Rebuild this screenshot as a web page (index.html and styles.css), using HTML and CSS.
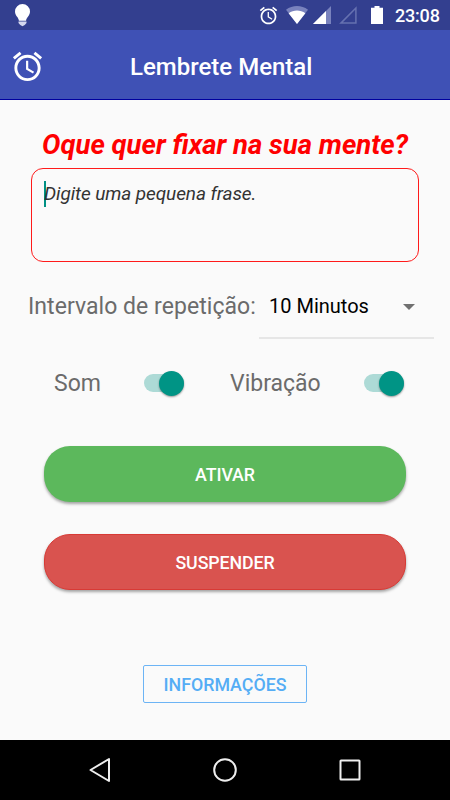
FILE: index.html
```html
<!DOCTYPE html>
<html lang="pt-BR">
<head>
  <meta charset="UTF-8" />
  <meta name="viewport" content="width=device-width, initial-scale=1.0" />
  <title>Lembrete Mental</title>
  <link rel="stylesheet" href="styles.css">
</head>
<body>
  <div class="app">
    <div class="status-bar">
      <svg class="bulb" width="16" height="23" viewBox="0 0 16 23">
        <path fill="#fff" d="M7.500 0A7.500 7.500 0 0 0 0 7.500c0 4.500 3.700 5.500 3.900 9.300h7.200c.2-3.800 3.900-4.800 3.900-9.300A7.500 7.500 0 0 0 7.500 0z"/>
        <path fill="#d5d8ee" d="M3.500 17.500h8v1.500l-1.800 2-2.200 1.200-2.200-1.200-1.800-2z"/>
      </svg>
      <div class="status-icons">
        <svg class="alarm" width="21" height="21" viewBox="0 0 24 24">
          <path fill="#fff" d="M22 5.720l-4.600-3.860-1.290 1.530 4.600 3.860L22 5.720zM7.880 3.390L6.600 1.860 2 5.710l1.290 1.530 4.590-3.850zM12.500 8H11v6l4.750 2.850.75-1.230-4-2.370V8zM12 4c-4.970 0-9 4.030-9 9s4.020 9 9 9c4.970 0 9-4.030 9-9s-4.030-9-9-9zm0 16c-3.870 0-7-3.130-7-7s3.130-7 7-7 7 3.130 7 7-3.130 7-7 7z"/>
        </svg>
        <svg class="wifi" width="22" height="18" viewBox="0 0 22 18">
          <path fill="#7982bd" d="M0 3.800C6.500-1.200 15.500-1.200 22 3.800L11 18z"/>
          <path fill="#fff" d="M2.600 7.200C7.600 3.600 14.400 3.600 19.400 7.200L11 18z"/>
        </svg>
        <svg class="signal" width="18" height="18" viewBox="0 0 18 18">
          <path fill="#7982bd" d="M18 0v18H0z"/>
          <path fill="#fff" d="M13 5v13H0z"/>
        </svg>
        <svg class="signal-empty" width="18" height="18" viewBox="0 0 18 18">
          <path fill="none" stroke="#6671b0" stroke-width="1.500" d="M16.900 2v15.100H1.900z"/>
        </svg>
        <svg class="battery" width="12" height="18" viewBox="0 0 12 18">
          <path fill="#fff" d="M3.500 0h5v1.800H12V18H0V1.800h3.500z"/>
        </svg>
        <span class="clock">23:08</span>
      </div>
    </div>

    <div class="toolbar">
      <svg class="logo" width="35" height="35" viewBox="0 0 24 24">
        <path fill="#fff" d="M22 5.720l-4.600-3.860-1.290 1.530 4.600 3.860L22 5.720zM7.880 3.390L6.600 1.860 2 5.710l1.290 1.530 4.590-3.850zM12.500 8H11v6l4.750 2.850.75-1.230-4-2.370V8zM12 4c-4.970 0-9 4.030-9 9s4.020 9 9 9c4.970 0 9-4.030 9-9s-4.030-9-9-9zm0 16c-3.870 0-7-3.130-7-7s3.130-7 7-7 7 3.130 7 7-3.130 7-7 7z"/>
      </svg>
      <h1>Lembrete Mental</h1>
    </div>

    <div class="content">
      <h2>Oque quer fixar na sua mente?</h2>
      <div class="phrase">
        <span class="caret"></span><span class="hint">Digite uma pequena frase.</span>
      </div>

      <div class="interval">
        <span class="label">Intervalo de repetição:</span>
        <div class="spinner">
          <span class="value">10 Minutos</span>
          <span class="arrow"></span>
        </div>
      </div>

      <div class="switches">
        <span class="label som">Som</span>
        <div class="switch"><span class="thumb"></span></div>
        <span class="label vibra">Vibração</span>
        <div class="switch"><span class="thumb"></span></div>
      </div>

      <button class="btn btn-on">ATIVAR</button>
      <button class="btn btn-off">SUSPENDER</button>
      <button class="btn-info">INFORMAÇÕES</button>
    </div>

    <div class="nav-bar">
      <svg width="24" height="26" viewBox="0 0 24 26">
        <path fill="none" stroke="#eee" stroke-width="2" stroke-linejoin="round" d="M21 2v22L2.500 13z"/>
      </svg>
      <svg width="24" height="26" viewBox="0 0 24 26">
        <circle cx="12" cy="13" r="10.800" fill="none" stroke="#eee" stroke-width="2"/>
      </svg>
      <svg width="24" height="26" viewBox="0 0 24 26">
        <rect x="2.500" y="3.500" width="19" height="19" rx="0.500" fill="none" stroke="#eee" stroke-width="2"/>
      </svg>
    </div>
  </div>
</body>
</html>
```
FILE: styles.css
```css
html, body {
  margin: 0;
  padding: 0;
  font-family: Roboto, sans-serif;
  background: #fafafa;
}

.app {
  width: 450px;
  height: 800px;
  display: flex;
  flex-direction: column;
  overflow: hidden;
}

h1, h2 {
  margin: 0;
  white-space: nowrap;
}

svg {
  display: block;
  flex: none;
}

.status-bar {
  height: 30px;
  background: #333f8f;
  display: flex;
  align-items: center;
  justify-content: space-between;
  padding: 0 10px 0 15px;
}

.status-icons {
  display: flex;
  align-items: center;
}

.wifi {
  margin-left: 7px;
}

.signal {
  margin-left: 5px;
}

.signal-empty {
  margin-left: 8px;
}

.battery {
  margin-left: 14px;
}

.clock {
  width: 45px;
  margin-left: 12px;
  font-size: 18px;
  font-weight: 500;
  line-height: 30px;
  letter-spacing: -0.2px;
  padding-top: 1px;
  color: #fff;
  white-space: nowrap;
}

.toolbar {
  height: 70px;
  box-sizing: border-box;
  background: #3f51b5;
  border-bottom: 1px solid #00009f;
  display: flex;
  align-items: center;
  padding: 3px 0 0 10px;
}

.toolbar h1 {
  margin-left: 85px;
  padding-top: 1px;
  font-size: 24px;
  font-weight: 500;
  color: #fff;
}

.content {
  height: 640px;
  display: flex;
  flex-direction: column;
}

.content h2 {
  margin: 29px 0 0 42px;
  font-size: 27.5px;
  line-height: 32px;
  font-weight: 700;
  font-style: italic;
  color: #f00;
}

.phrase {
  box-sizing: border-box;
  width: 388px;
  height: 94px;
  margin: 7px 0 0 31px;
  padding: 12px 0 0 12px;
  border: 1px solid #ff1a1a;
  border-radius: 12px;
  display: flex;
}

.caret {
  width: 2px;
  height: 26px;
  margin-right: -2px;
  background: #009083;
}

.hint {
  font-size: 19px;
  line-height: 26px;
  font-style: italic;
  font-weight: 400;
  letter-spacing: -0.1px;
  color: #333;
  white-space: nowrap;
}

.interval {
  height: 77px;
  display: flex;
  padding-left: 28px;
}

.label {
  font-size: 23px;
  color: #6b6b6b;
  white-space: nowrap;
}

.interval .label {
  width: 231px;
  line-height: 89px;
  letter-spacing: 0.05px;
}

.spinner {
  box-sizing: border-box;
  width: 175px;
  height: 77px;
  padding: 0 19px 0 10px;
  border-bottom: 2px solid #e6e6e6;
  display: flex;
  align-items: center;
  justify-content: space-between;
}

.value {
  font-size: 20px;
  line-height: 24px;
  padding-top: 13px;
  color: #000;
  white-space: nowrap;
}

.arrow {
  margin-top: 14px;
  border: 6px solid transparent;
  border-top-color: #707070;
  border-bottom: 0;
}

.switches {
  height: 30px;
  margin-top: 29px;
  padding-left: 54px;
  display: flex;
  align-items: center;
}

.som {
  width: 90px;
}

.vibra {
  width: 134px;
  margin-left: 46px;
}

.switch {
  width: 40px;
  height: 18px;
  border-radius: 9px;
  background: #addad6;
  display: flex;
  align-items: center;
  justify-content: flex-end;
}

.thumb {
  width: 25px;
  height: 25px;
  border-radius: 50%;
  background: #009485;
  box-shadow: 0 1px 2px rgba(0, 0, 0, 0.4);
}

.btn {
  width: 362px;
  height: 56px;
  margin: 48px 0 0 44px;
  padding: 1px 0 0;
  border: none;
  border-radius: 26px;
  box-shadow: 0 2px 3px rgba(0, 0, 0, 0.35);
  font-family: inherit;
  font-size: 17.8px;
  font-weight: 500;
  letter-spacing: -0.1px;
  color: #fff;
}

.btn-on {
  background: #5cb85c;
}

.btn-off {
  margin-top: 32px;
  background: #d9534f;
  border: 1px solid #d83a35;
}

.btn-info {
  width: 164px;
  height: 38px;
  margin: 75px 0 0 143px;
  padding: 0;
  background: transparent;
  border: 1px solid #6cb4f5;
  border-radius: 2px;
  font-family: inherit;
  font-size: 17.8px;
  font-weight: 500;
  color: #55adf5;
}

.nav-bar {
  height: 60px;
  background: #000;
  display: flex;
  align-items: center;
  justify-content: space-between;
  padding: 0 88px;
}
```
